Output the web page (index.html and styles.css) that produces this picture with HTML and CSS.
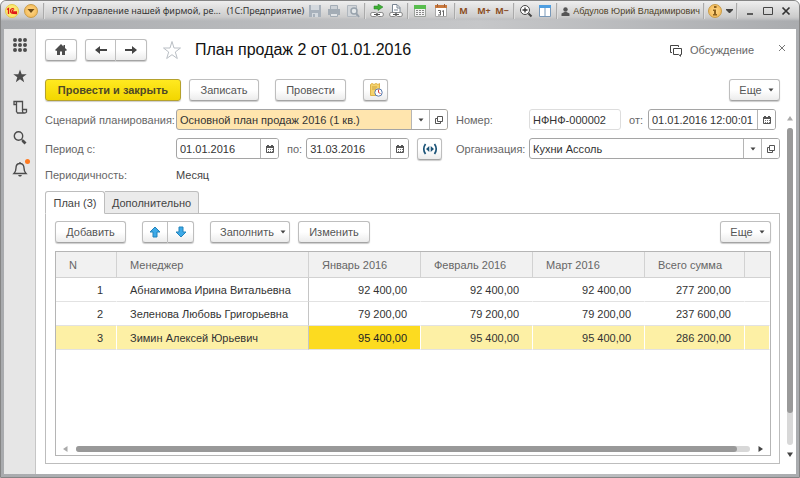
FILE: index.html
```html
<!DOCTYPE html>
<html lang="ru">
<head>
<meta charset="utf-8">
<title>План продаж 2 от 01.01.2016</title>
<link rel="stylesheet" href="styles.css">
</head>
<body>
<svg class="defs" aria-hidden="true">
  <symbol id="calendar" viewBox="0 0 10 10"><path d="M1.500 2.500h7v6h-7z" fill="#fff" stroke="#555"/><path d="M1 2h8v2H1zM2 1h2v2H2zM6 1h2v2H6z" fill="#555"/><path d="M3 5.500h1m1 0h1m1 0h1m-5 2h1m1 0h1m1 0h1" stroke="#777"/></symbol>
  <symbol id="open" viewBox="0 0 10 10"><path d="M3.500 1.500h5v5h-5zM3 3.500H1.500v5h5V7" fill="none" stroke="#555"/></symbol>
  <symbol id="caret" viewBox="0 0 6 4"><path d="M.5.5h5L3 3.500z" fill="#444"/></symbol>
</svg>
<div class="window">
  <header class="titlebar">
    <button class="round logo" aria-label="1С"><svg width="14" height="14" viewBox="0 0 14 14"><path d="M2 5.500 3.500 4.500V10M9 5.500C8 4 5.500 4.500 5.500 7S7 9.500 12 9.500M8.500 6.500C7 6 7 8 8 8h4" fill="none" stroke="#e01818" stroke-width="1.300"/></svg></button>
    <button class="round" aria-label="Главное меню"><svg width="8" height="5" viewBox="0 0 8 5"><path d="M.5 0h7L4 4z" fill="#6b4a18"/></svg></button>
    <i class="sep"></i>
    <div class="caption"><span>РТК / Управление нашей фирмой, ре...</span><span>(1С:Предприятие)</span></div>
    <div class="tools">
      <button aria-label="Сохранить"><svg width="14" height="14" viewBox="0 0 14 14"><path d="M1 1h12v12H1z" fill="#a8b1bb"/><path d="M3 1h8v5H3zM4 9h6v4H4z" fill="#d4d9de"/><path d="M5 10h2v3H5z" fill="#a8b1bb"/></svg></button>
      <button aria-label="Печать"><svg width="14" height="14" viewBox="0 0 14 14"><path d="M3.500 1.500h7v4h-7z" fill="#cdd2d7" stroke="#a3acb5"/><path d="M1 5h12v6H1z" fill="#a3acb5"/><path d="M3.500 9.500h7v3h-7z" fill="#e1e4e7" stroke="#a3acb5"/></svg></button>
      <button aria-label="Просмотр"><svg width="14" height="14" viewBox="0 0 14 14"><path d="M1.500 1.500h9v11h-9z" fill="#d2d6da" stroke="#b0b7be"/><circle cx="8" cy="7" r="3" fill="#e4e8ea" stroke="#98a2ac" stroke-width="1.500"/><path d="m10 9 3 4" stroke="#98a2ac" stroke-width="2"/></svg></button>
      <i class="sep"></i>
      <button aria-label="Получить ссылку"><svg width="14" height="14" viewBox="0 0 14 14"><path d="M4 2h4V0l5 3-5 3.500V5H4z" fill="#3fae35" stroke="#238023" stroke-width=".5"/><rect x=".7" y="8.500" width="6" height="4" rx="1.500" fill="#fff" stroke="#888"/><rect x="7.300" y="8.500" width="6" height="4" rx="1.500" fill="#fff" stroke="#888"/><path d="M4 10.500h6" stroke="#555"/></svg></button>
      <button aria-label="Перейти по ссылке"><svg width="14" height="14" viewBox="0 0 14 14"><path d="M3.500.5H8l3 3v5H3.500z" fill="#fff" stroke="#7b8794"/><path d="M8 1v3h3M5 6h4" fill="none" stroke="#7b8794"/><rect x=".7" y="8.500" width="6" height="4" rx="1.500" fill="#fff" stroke="#888"/><rect x="7.300" y="8.500" width="6" height="4" rx="1.500" fill="#fff" stroke="#888"/><path d="M4 10.500h6" stroke="#555"/></svg></button>
      <i class="sep"></i>
      <button aria-label="Калькулятор"><svg width="14" height="14" viewBox="0 0 14 14"><path d="M1.500 1.500h11v11h-11z" fill="#f2f2f2" stroke="#9ca19c"/><path d="M1 1h12v4H1z" fill="#58bd4e"/><path d="M3 6.500h8M3 8.500h8M3 10.500h8" stroke="#888" stroke-dasharray="2 1"/></svg></button>
      <button class="wide" aria-label="Календарь"><svg width="14" height="14" viewBox="0 0 14 14"><path d="M1.500 1.500h11v11h-11z" fill="#fff" stroke="#aaa"/><path d="M1 1h12v3H1z" fill="#c9793d"/><path d="M3.500 0v3M10.500 0v3" stroke="#a06038"/><path d="M4 6.500h2.500v2H5h1.500v2.500H4M8 7.500l1.500-1V12" fill="none" stroke="#666"/></svg></button>
      <i class="sep"></i>
      <button class="mem">M</button><button class="mem">M+</button><button class="mem">M−</button>
      <i class="sep"></i>
      <button aria-label="Масштаб"><svg width="14" height="14" viewBox="0 0 14 14"><circle cx="6" cy="6" r="4.500" fill="#fff" stroke="#444"/><path d="M6 3.500v5M3.500 6h5" stroke="#333" stroke-width="1.300"/><path d="m9.500 9.500 3 3" stroke="#444" stroke-width="2"/></svg></button>
      <button aria-label="Панели"><svg width="14" height="14" viewBox="0 0 14 14"><path d="M1.500 1.500h11v11h-11zM7 4v8" fill="#fff" stroke="#7898b8"/><path d="M1 1h12v3H1z" fill="#4e9ee0"/></svg></button>
      <i class="sep"></i>
      <button class="user"><svg width="9" height="9" viewBox="0 0 9 9"><circle cx="4.500" cy="2.500" r="2.200" fill="#555"/><path d="M.5 9V6.500l3-1.500h2l3 1.500V9z" fill="#555"/></svg>Абдулов Юрий Владимирович</button>
      <i class="sep"></i>
      <button class="round" aria-label="Информация"><svg width="6" height="10" viewBox="0 0 6 10"><path d="M2 0h2.500v2H2zM1 3.500h3V8h1v1.500H1V8h1V5H1z" fill="#8b6120"/></svg></button>
      <button class="small" aria-label="Ещё"><svg width="7" height="4" viewBox="0 0 7 4"><path d="M0 0h7v1L4 4H3L0 1z" fill="#444"/></svg></button>
      <i class="sep"></i>
      <div class="controls">
        <button aria-label="Свернуть"><svg width="10" height="10" viewBox="0 0 10 10"><path d="M2 8h6" stroke="#333" stroke-width="1.500"/></svg></button>
        <button aria-label="Развернуть"><svg width="10" height="10" viewBox="0 0 10 10"><path d="M.5 1.500h9v7h-9z" fill="none" stroke="#444"/></svg></button>
        <button aria-label="Закрыть окно"><svg width="10" height="10" viewBox="0 0 10 10"><path d="m1.500 1.500 7 7m0-7-7 7" stroke="#333" stroke-width="1.700"/></svg></button>
      </div>
    </div>
  </header>
  <div class="workspace">
    <nav class="sidebar">
      <button aria-label="Разделы"><svg width="16" height="16" viewBox="0 0 16 16" fill="#4c4c4c"><path d="M1 3a2 2 0 1 1 4 0 2 2 0 0 1-4 0m5 0a2 2 0 1 1 4 0 2 2 0 0 1-4 0m5 0a2 2 0 1 1 4 0 2 2 0 0 1-4 0M1 8a2 2 0 1 1 4 0 2 2 0 0 1-4 0m5 0a2 2 0 1 1 4 0 2 2 0 0 1-4 0m5 0a2 2 0 1 1 4 0 2 2 0 0 1-4 0M1 13a2 2 0 1 1 4 0 2 2 0 0 1-4 0m5 0a2 2 0 1 1 4 0 2 2 0 0 1-4 0m5 0a2 2 0 1 1 4 0 2 2 0 0 1-4 0"/></svg></button>
      <button aria-label="Избранное"><svg width="16" height="16" viewBox="0 0 16 16"><path d="m8 1.500 1.700 4.700 5 .1-4 3 1.500 4.900L8 11.300l-4.200 2.900 1.500-4.900-4-3 5-.1z" fill="#4c4c4c"/></svg></button>
      <button aria-label="История"><svg width="16" height="16" viewBox="0 0 16 16"><path d="M4.500 5.500H2V2.500h8.500V12M4.500 2.500V13M11 10.500h3.500V13q-.5 1-2 1h-7l-1-1.500M10.500 10v2q0 2 1.500 2" fill="none" stroke="#4c4c4c" stroke-width="1.300"/></svg></button>
      <button aria-label="Поиск"><svg width="16" height="16" viewBox="0 0 16 16"><circle cx="6.500" cy="6" r="4.200" fill="none" stroke="#4c4c4c" stroke-width="1.400"/><path d="m9.500 9.500 1.500 1.200" stroke="#4c4c4c" stroke-width="1.500"/><path d="m10.500 10.500 3 3" stroke="#4c4c4c" stroke-width="2.800"/></svg></button>
      <button class="bell" aria-label="Уведомления"><svg width="16" height="16" viewBox="0 0 16 16"><path d="M2 12.500h12c-1.500-1.500-2-2-2-5.500 0-3-1.500-4.500-4-4.500S4 4 4 7c0 3.500-.5 4-2 5.500zM8 2.500V1" fill="none" stroke="#4c4c4c" stroke-width="1.400"/><path d="M6 14h4l-1 1.500H7z" fill="#4c4c4c"/></svg><i class="dot"></i></button>
    </nav>
    <main>
      <div class="heading">
        <button class="btn icon home" aria-label="Домой"><svg width="12" height="12" viewBox="0 0 12 12"><path d="M6 0 0 6l1.200 1L2 6.400V11h3V7.500h2V11h3V6.400l.8.6L12 6l-2-2V1H8.500v1.500z" fill="#4c4c4c"/></svg></button>
        <div class="group"><button class="btn" aria-label="Назад"><svg width="12" height="10" viewBox="0 0 12 10"><path d="M0 5 5 1v3h7v2H5v3z" fill="#444"/></svg></button><button class="btn" aria-label="Вперёд"><svg width="12" height="10" viewBox="0 0 12 10"><path d="M12 5 7 1v3H0v2h7v3z" fill="#444"/></svg></button></div>
        <button class="plain star" aria-label="В избранное"><svg width="20" height="20" viewBox="0 0 20 20"><path d="m10 1.500 2 6.500h6.500l-5.200 4 2 6.500L10 14.700l-5.300 3.800 2-6.500-5.200-4H8z" fill="#fff" stroke="#b9bec4"/></svg></button>
        <h1>План продаж 2 от 01.01.2016</h1>
        <button class="plain talk"><svg width="14" height="13" viewBox="0 0 14 13"><path d="M3 8.500H1.500v-7h8V3M4.500 4.500h8v6h-1v1.800L9.700 10.500H4.500z" fill="none" stroke="#444"/></svg>Обсуждение</button>
        <button class="plain close" aria-label="Закрыть"><svg width="8" height="8" viewBox="0 0 8 8"><path d="m1 1 6 6m0-6L1 7" stroke="#777"/></svg></button>
      </div>
      <div class="content">
        <div class="form">
          <div class="commands">
            <button class="btn primary">Провести и закрыть</button>
            <button class="btn write">Записать</button>
            <button class="btn post">Провести</button>
            <button class="btn report" aria-label="Отчёт"><svg width="14" height="14" viewBox="0 0 14 14"><path d="M1.500 1.500 3 .5l2 1 2-1 2 1 1.500-1v12h-9z" fill="#f5d36c" stroke="#ddb24a"/><path d="M3 4h5M3 6h4" stroke="#cda13e"/><circle cx="9.500" cy="9.500" r="3.700" fill="#fff" stroke="#587aae"/><path d="M9.500 9.500V6.500M9.500 9.500l2 1" stroke="#d04444"/></svg></button>
            <button class="btn more">Еще<svg width="6" height="4"><use href="#caret"/></svg></button>
          </div>
          <div class="row">
            <label class="first" for="scenario">Сценарий планирования:</label>
            <div class="field combo accent"><input id="scenario" value="Основной план продаж 2016 (1 кв.)"><button aria-label="Выбрать"><svg width="6" height="4"><use href="#caret"/></svg></button><button aria-label="Открыть"><svg width="10" height="10"><use href="#open"/></svg></button></div>
            <label class="second" for="number">Номер:</label>
            <div class="field number"><input id="number" value="НФНФ-000002" readonly></div>
            <label class="from" for="date">от:</label>
            <div class="field datetime"><input id="date" value="01.01.2016 12:00:01"><button aria-label="Календарь"><svg width="10" height="10"><use href="#calendar"/></svg></button></div>
          </div>
          <div class="row">
            <label class="first" for="start">Период с:</label>
            <div class="period">
              <div class="field day"><input id="start" value="01.01.2016"><button aria-label="Календарь"><svg width="10" height="10"><use href="#calendar"/></svg></button></div>
              <label for="end">по:</label>
              <div class="field day"><input id="end" value="31.03.2016"><button aria-label="Календарь"><svg width="10" height="10"><use href="#calendar"/></svg></button></div>
              <button class="btn span" aria-label="Выбрать период"><svg width="16" height="12" viewBox="0 0 16 12"><path d="M3.500 1Q0 6 3.500 11M12.500 1q3.500 5 0 10" fill="none" stroke="#1c5478" stroke-width="1.700"/><path d="M7.300 3v6L4 6zM8.700 3v6L12 6z" fill="#1c5478"/></svg></button>
            </div>
            <label class="second" for="company">Организация:</label>
            <div class="field company"><input id="company" value="Кухни Ассоль"><button aria-label="Выбрать"><svg width="6" height="4"><use href="#caret"/></svg></button><button aria-label="Открыть"><svg width="10" height="10"><use href="#open"/></svg></button></div>
          </div>
          <div class="row info"><span class="first">Периодичность:</span><span class="value">Месяц</span></div>
          <div class="tabs" role="tablist"><button class="tab active" role="tab" aria-selected="true">План (3)</button><button class="tab" role="tab" aria-selected="false">Дополнительно</button></div>
          <section class="panel">
            <div class="toolbar">
              <button class="btn add">Добавить</button>
              <div class="group arrows"><button class="btn" aria-label="Вверх"><svg width="12" height="12" viewBox="0 0 12 12"><path d="m6 1 5 5H8v5H4V6H1z" fill="#3daae8" stroke="#2383bb"/></svg></button><button class="btn" aria-label="Вниз"><svg width="12" height="12" viewBox="0 0 12 12"><path d="m6 11 5-5H8V1H4v5H1z" fill="#3daae8" stroke="#2383bb"/></svg></button></div>
              <button class="btn fill">Заполнить<svg width="6" height="4"><use href="#caret"/></svg></button>
              <button class="btn edit">Изменить</button>
              <button class="btn more">Еще<svg width="6" height="4"><use href="#caret"/></svg></button>
            </div>
            <div class="grid">
              <table>
                <colgroup><col class="c-n"><col class="c-name"><col class="c-sum"><col class="c-sum"><col class="c-sum"><col class="c-total"><col></colgroup>
                <thead><tr><th>N</th><th>Менеджер</th><th>Январь 2016</th><th>Февраль 2016</th><th>Март 2016</th><th>Всего сумма</th><th></th></tr></thead>
                <tbody>
                  <tr><td>1</td><td>Абнагимова Ирина Витальевна</td><td>92 400,00</td><td>92 400,00</td><td>92 400,00</td><td>277 200,00</td><td></td></tr>
                  <tr><td>2</td><td>Зеленова Любовь Григорьевна</td><td>79 200,00</td><td>79 200,00</td><td>79 200,00</td><td>237 600,00</td><td></td></tr>
                  <tr class="selected"><td>3</td><td>Зимин Алексей Юрьевич</td><td class="current">95 400,00</td><td>95 400,00</td><td>95 400,00</td><td>286 200,00</td><td></td></tr>
                </tbody>
              </table>
              <div class="hscroll"><svg width="5" height="6" viewBox="0 0 5 6"><path d="M4.500 0v6L0 3z" fill="#aaa"/></svg><div class="track"><div class="thumb"></div></div><svg width="5" height="6" viewBox="0 0 5 6"><path d="M.5 0v6L5 3z" fill="#444"/></svg></div>
            </div>
          </section>
        </div>
        <div class="vscroll"><svg width="6" height="5" viewBox="0 0 6 5"><path d="M0 4.500h6L3 0z" fill="#aaa"/></svg><div class="track"><div class="thumb"></div></div><svg width="6" height="5" viewBox="0 0 6 5"><path d="M0 .5h6L3 5z" fill="#444"/></svg></div>
      </div>
    </main>
  </div>
</div>
</body>
</html>
```
FILE: styles.css
```css
* { box-sizing: border-box; }
body { margin: 0; background: #fff; color: #4a4a4a; font: 11px/16px "Liberation Sans", Arial, sans-serif; }
button, input { font: inherit; color: inherit; margin: 0; }
button { display: flex; align-items: center; justify-content: center; padding: 0; border: 0; background: none; white-space: nowrap; }
svg { display: block; flex: none; }
.defs { position: absolute; width: 0; height: 0; }

.window { height: 100vh; display: flex; flex-direction: column; padding: 0 3px 3px; border: 1px solid #858585; border-radius: 6px 6px 0 0; background: linear-gradient(90deg, #a9abae, #c6c7c9 60%, #aaacaf); overflow: hidden; }

.titlebar { display: flex; align-items: center; height: 28px; padding: 0 4px 8px 0; margin: 0 -3px; background: linear-gradient(#eee, #ccc 16px, #bfc0c2 18px, transparent 20px); color: #333; font: 9px/16px "Noto Sans", sans-serif; }
.round { width: 14px; height: 14px; border-radius: 50%; border: 1px solid #c99b45; background: radial-gradient(#ffd98a, #f1b24c); }
.titlebar > .round { margin-left: 4px; margin-right: 1px; }
.logo { border-color: #e3ca4b; background: #fbe870; }
.sep { width: 1px; height: 16px; background: #aaa; border-right: 1px solid #ddd; box-sizing: content-box; }
.titlebar > .sep { margin-left: 4px; }
.caption { flex: 1; display: flex; gap: 6px; margin-left: 7px; min-width: 0; white-space: nowrap; }
.tools { display: flex; align-items: center; gap: 3px; }
.tools > button { min-width: 16px; height: 18px; }
.tools > .wide { min-width: 20px; }
.tools > .round { min-width: 14px; height: 14px; }
.tools > .small { min-width: 8px; }
.tools > .mem { min-width: 15px; justify-content: flex-start; color: #8b4d1f; font-weight: bold; }
.tools > .user { gap: 3px; color: #4d4025; font-family: "Liberation Sans", Arial, sans-serif; }
.controls { display: flex; gap: 8px; padding: 0 4px; }

.workspace { flex: 1; display: flex; min-height: 0; }
.sidebar { flex: none; width: 32px; display: flex; flex-direction: column; align-items: center; gap: 15px; padding-top: 8px; background: #e6e6e6; border-right: 1px solid #c6c6c6; }
.sidebar button { position: relative; width: 16px; height: 16px; }
.dot { position: absolute; top: -2px; right: -2px; width: 5px; height: 5px; border-radius: 50%; background: #ff7a20; }

main { flex: 1; display: flex; flex-direction: column; min-width: 0; background: #fff; padding: 10px 3px 0 9px; }
.heading { display: flex; align-items: center; height: 22px; }
.btn { height: 22px; border: 1px solid #bebebe; border-bottom-color: #a4a4a4; border-radius: 3px; background: linear-gradient(#fff 50%, #ececec); box-shadow: 0 1px 1px #ccc; color: #555; }
.group { display: flex; }
.group .btn { width: 31px; border-radius: 3px 0 0 3px; }
.group .btn + .btn { border-left: 0; border-radius: 0 3px 3px 0; }
.home { width: 32px; margin-right: 8px; }
.star { margin-left: 15px; }
h1 { flex: 1; margin: 0 0 0 13px; color: #111; font-size: 16px; line-height: 22px; font-weight: normal; }
.talk { gap: 7px; color: #666; }
.close { margin: 0 7px 4px 24px; }

.content { flex: 1; display: flex; min-height: 0; margin-top: 18px; }
.form { flex: 1; min-width: 0; display: flex; flex-direction: column; padding-bottom: 10px; }
.commands { display: flex; gap: 8px; margin-bottom: 8px; }
.primary { width: 136px; border-color: #b5a12c; background: linear-gradient(#ffe920, #f2d600); color: #4f4926; font-weight: bold; }
.write { width: 70px; }
.post { width: 71px; margin-left: 8px; }
.report { width: 25px; margin-left: 9px; }
.more { width: 51px; gap: 6px; margin-left: auto; padding-left: 4px; }
.row { display: flex; align-items: center; height: 21px; margin-bottom: 8px; white-space: nowrap; }
.row.info { height: 16px; }
.first { flex: none; width: 131px; }
.second { flex: none; width: 73px; margin-left: 8px; }
label, .first { color: #666; }
.value { color: #444; }
.field { display: flex; height: 21px; border: 1px solid #a5a5a5; border-radius: 3px; background: #fff; overflow: hidden; }
.field input { flex: 1; width: 0; min-width: 0; padding: 0 3px; border: 0; outline: 0; background: none; color: #333; }
.field button { width: 18px; border-left: 1px solid #b5b5b5; background: #fff; }
.combo { width: 272px; }
.accent { background: #ffe5ae; }
.number { flex: 1; border-color: #ddd; }
.from { margin: 0 5px 0 8px; }
.datetime { width: 128px; margin-right: 4px; }
.period { display: flex; align-items: center; width: 272px; gap: 8px; }
.day { width: 103px; }
.period label { margin-right: -4px; }
.span { width: 25px; }
.company { flex: 1; }

.tabs { position: relative; display: flex; height: 23px; margin-bottom: -1px; }
.tab { width: 94px; border: 1px solid #bdbdbd; border-left: 0; border-radius: 0 3px 0 0; background: #ebebeb; color: #444; }
.tab.active { width: 60px; border-left: 1px solid #bdbdbd; border-bottom-color: #fff; border-radius: 3px 3px 0 0; background: #fff; }
.panel { flex: 1; display: flex; flex-direction: column; min-height: 0; padding: 7px 8px 7px 9px; border: 1px solid #bdbdbd; }
.toolbar { display: flex; gap: 8px; margin-bottom: 8px; }
.add { width: 71px; }
.arrows { margin-left: 8px; }
.arrows .btn { width: 26px; }
.fill { width: 80px; gap: 6px; margin-left: 8px; padding-left: 6px; }
.edit { width: 72px; }

.grid { flex: 1; display: flex; flex-direction: column; justify-content: space-between; min-height: 0; border: 1px solid #b5b5b5; }
table { width: 100%; table-layout: fixed; border-collapse: separate; border-spacing: 0; }
.c-n { width: 61px; }
.c-name { width: 192px; }
.c-sum { width: 112px; }
.c-total { width: 100px; }
th, td { height: 24px; padding: 0 13px; border-bottom: 1px solid #e2e2e2; white-space: nowrap; }
th { height: 26px; background: #f1f1f1; border-right: 1px solid #d2d2d2; border-bottom-color: #d2d2d2; color: #666; font-weight: normal; text-align: left; }
th:last-child { border-right: 0; }
td { color: #333; text-align: right; border-right: 1px solid transparent; }
td:nth-child(2) { text-align: left; border-right-color: #c5c5c5; }
.selected td { background: #fdf0a5; border-right-color: #fff; }
.selected td:nth-child(2) { border-right-color: #c5c5c5; }
.selected .current { background: #fcdb20; color: #222; }
.hscroll { display: flex; align-items: center; gap: 8px; height: 12px; padding: 0 7px; }
.track { flex: 1; border-radius: 3px; background: #d8d8d8; }
.hscroll .track { height: 6px; }
.hscroll .thumb { width: 98%; height: 6px; border-radius: 3px; background: #999; }
.vscroll { flex: none; width: 6px; margin-left: 7px; display: flex; flex-direction: column; align-items: center; gap: 7px; padding: 37px 0 17px; }
.vscroll .track { width: 6px; }
.vscroll .thumb { width: 6px; height: 90%; border-radius: 3px; background: #999; }
```
